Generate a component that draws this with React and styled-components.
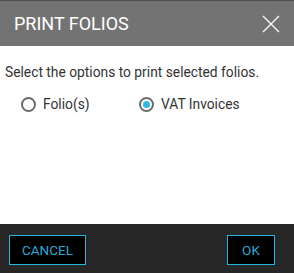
import * as React from 'react';
import styled, { createGlobalStyle } from 'styled-components';

const GlobalStyle = createGlobalStyle`
   html, body {
      margin: 0;
      padding: 0;
      background: #ffffff;
   }
   body {
      font-family: Roboto, "Liberation Sans", sans-serif;
   }
`;

const Dialog = styled.div`
   display: flex;
   flex-direction: column;
   width: 294px;
   height: 273px;
   background: #ffffff;
   border-top: 1px solid #4e4e4e;
   box-sizing: border-box;
`;

const Header = styled.header`
   display: flex;
   align-items: center;
   justify-content: space-between;
   height: 45px;
   padding: 0 13px 0 14px;
   background: #737373;
   color: #ffffff;
   flex-shrink: 0;

   h1 {
      margin: 0;
      font-size: 18px;
      font-weight: 400;
      letter-spacing: 0;
   }
`;

const CloseButton = styled.button`
   display: flex;
   padding: 0;
   border: none;
   background: transparent;
   cursor: pointer;
`;

const Content = styled.section`
   flex-grow: 1;
   padding: 18px 5px 0;
   color: #333333;
   font-size: 13.8px;
`;

const Options = styled.div`
   display: flex;
   margin-top: 16px;
   padding-left: 16px;
`;

const Option = styled.label`
   display: flex;
   align-items: center;
   gap: 7px;
   width: 118px;
   font-size: 13.8px;
   color: #333333;
   cursor: pointer;
`;

const Radio = styled.span`
   position: relative;
   width: 15px;
   height: 15px;
   border: 2px solid #6b6b6b;
   border-radius: 50%;
   box-sizing: border-box;

   &::after {
      content: '';
      display: ${(p) => (p.checked ? 'block' : 'none')};
      position: absolute;
      top: 2px;
      left: 2px;
      width: 7px;
      height: 7px;
      border-radius: 50%;
      background: #2fbbe8;
   }
`;

const Footer = styled.footer`
   display: flex;
   justify-content: space-between;
   align-items: flex-start;
   height: 49px;
   padding: 11px 19px 0 9px;
   box-sizing: border-box;
   background: #262626;
   flex-shrink: 0;
`;

const ActionButton = styled.button`
   height: 30px;
   min-width: ${(p) => p.width}px;
   padding: 0 10px;
   background: #000000;
   border: 1px solid #21b8e0;
   color: #2aa8d2;
   font-family: Roboto, "Liberation Sans", sans-serif;
   font-size: 13.5px;
   box-sizing: border-box;
   cursor: pointer;
`;

const CloseIcon = () => (
   <svg width="20" height="20" viewBox="0 0 20 20">
      <path d="M2 2 L18 18 M18 2 L2 18" stroke="#ffffff" strokeWidth="1.2" fill="none" />
   </svg>
);

export default function App() {
   const [choice, setChoice] = React.useState('vat');
   return (
      <>
         <GlobalStyle />
         <Dialog>
            <Header>
               <h1>PRINT FOLIOS</h1>
               <CloseButton aria-label="Close">
                  <CloseIcon />
               </CloseButton>
            </Header>
            <Content>
               <div>Select the options to print selected folios.</div>
               <Options>
                  <Option onClick={() => setChoice('folio')}>
                     <Radio checked={choice === 'folio'} />
                     Folio(s)
                  </Option>
                  <Option onClick={() => setChoice('vat')}>
                     <Radio checked={choice === 'vat'} />
                     VAT Invoices
                  </Option>
               </Options>
            </Content>
            <Footer>
               <ActionButton width={77}>CANCEL</ActionButton>
               <ActionButton width={48}>OK</ActionButton>
            </Footer>
         </Dialog>
      </>
   );
}
